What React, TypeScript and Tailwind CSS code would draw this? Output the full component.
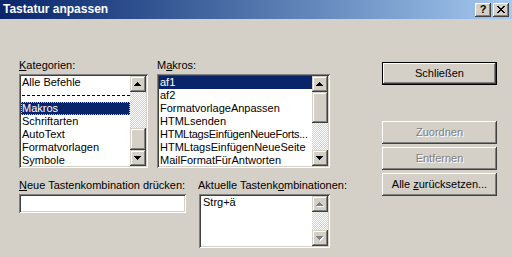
import React from "react";

const raised =
  "shadow-[inset_-1px_-1px_0_#404040,inset_1px_1px_0_#ffffff,inset_-2px_-2px_0_#808080,inset_2px_2px_0_#d4d0c8]";
const raisedSb =
  "shadow-[inset_-1px_-1px_0_#404040,inset_1px_1px_0_#d4d0c8,inset_-2px_-2px_0_#808080,inset_2px_2px_0_#ffffff]";
const sunken =
  "shadow-[inset_1px_1px_0_#808080,inset_-1px_-1px_0_#ffffff,inset_2px_2px_0_#404040,inset_-2px_-2px_0_#d4d0c8]";
const checker =
  "[background:repeating-conic-gradient(#d4d0c8_0_25%,#ffffff_0_50%)_0_0/2px_2px]";

function Arrow({ up, disabled }: { up: boolean; disabled?: boolean }) {
  const rows = up
    ? [
        [3, 1],
        [2, 3],
        [1, 5],
        [0, 7],
      ]
    : [
        [0, 7],
        [1, 5],
        [2, 3],
        [3, 1],
      ];
  return (
    <svg width="8" height="5" viewBox="0 0 8 5" shapeRendering="crispEdges">
      {disabled &&
        rows.map(([x, w], i) => (
          <rect key={"s" + i} x={x + 1} y={i + 1} width={w} height={1} fill="#ffffff" />
        ))}
      {rows.map(([x, w], i) => (
        <rect key={i} x={x} y={i} width={w} height={1} fill={disabled ? "#808080" : "#000000"} />
      ))}
    </svg>
  );
}

function SbButton({ up, disabled }: { up: boolean; disabled?: boolean }) {
  return (
    <div className={`w-[16px] h-[16px] flex-none bg-[#d4d0c8] flex items-center justify-center ${raisedSb}`}>
      <Arrow up={up} disabled={disabled} />
    </div>
  );
}

function ScrollBar({
  trackBefore,
  thumbH,
  disabled,
}: {
  trackBefore?: number;
  thumbH?: number;
  disabled?: boolean;
}) {
  return (
    <div className="w-[16px] h-full flex flex-col flex-none">
      <SbButton up disabled={disabled} />
      <div className={`flex-1 flex flex-col ${checker}`}>
        {thumbH !== undefined && (
          <div
            className={`w-[16px] flex-none bg-[#d4d0c8] ${raisedSb}`}
            style={{ marginTop: trackBefore, height: thumbH }}
          />
        )}
      </div>
      <SbButton up={false} disabled={disabled} />
    </div>
  );
}

function Row({
  children,
  selected,
  focus,
  tight,
}: {
  children: React.ReactNode;
  selected?: boolean;
  focus?: boolean;
  tight?: boolean;
}) {
  return (
    <div
      className={`h-[13px] leading-[13px] pl-[1px] whitespace-nowrap ${tight ? "tracking-[-0.25px]" : ""} ${
        selected ? "bg-[#0a246a] text-white" : "text-black"
      } ${focus ? "outline-1 outline-dotted outline-[#d8c078] -outline-offset-1" : ""}`}
    >
      {children}
    </div>
  );
}

function ListBox({
  className,
  children,
  scroll,
}: {
  className: string;
  children: React.ReactNode;
  scroll: React.ReactNode;
}) {
  return (
    <div className={`bg-white p-[2px] ${sunken} ${className}`}>
      <div className="flex h-full">
        <div className="flex-1 overflow-hidden">{children}</div>
        {scroll}
      </div>
    </div>
  );
}

function Btn({
  children,
  disabled,
  def,
}: {
  children: React.ReactNode;
  disabled?: boolean;
  def?: boolean;
}) {
  const inner = (
    <div
      className={`h-full w-full flex items-center justify-center bg-[#d4d0c8] ${raised} ${
        disabled ? "text-[#808080] [text-shadow:1px_1px_0_#ffffff]" : "text-black"
      }`}
    >
      {children}
    </div>
  );
  return (
    <div className={`w-[115px] h-[23px] ${def ? "border border-black" : ""}`}>{inner}</div>
  );
}

export default function App() {
  return (
    <div className="w-[512px] h-[257px] bg-[#d4d0c8] flex flex-col overflow-hidden text-[11px] [font-family:'Liberation_Sans',Arial,sans-serif] text-black">
      {/* Title bar */}
      <div className="h-[19px] flex-none flex items-center justify-between bg-gradient-to-r from-[#0a246a] to-[#a6caf0] pl-[3px] pr-[3px]">
        <span className="text-white font-bold text-[12px] leading-[19px]">Tastatur anpassen</span>
        <div className="flex gap-[2px]">
          <div className={`w-[16px] h-[14px] bg-[#d4d0c8] flex items-center justify-center ${raised}`}>
            <span className="font-bold text-[11px] leading-none text-black">?</span>
          </div>
          <div className={`w-[16px] h-[14px] bg-[#d4d0c8] flex items-center justify-center ${raised}`}>
            <svg width="8" height="7" viewBox="0 0 8 7" shapeRendering="crispEdges">
              <path d="M0 0h2v1h-2zM6 0h2v1h-2zM1 1h2v1h-2zM5 1h2v1h-2zM2 2h4v1h-4zM3 3h2v1h-2zM2 4h4v1h-4zM1 5h2v1h-2zM5 5h2v1h-2zM0 6h2v1h-2zM6 6h2v1h-2z" fill="#000" />
            </svg>
          </div>
        </div>
      </div>

      {/* Body */}
      <div className="flex flex-1">
        {/* Left area */}
        <div className="w-[330px] flex-none pl-[18px] pt-[40px]">
          <div className="flex">
            <div className="w-[130px] flex-none">
              <div className="h-[13px] leading-[13px] pl-[1px]">
                <span className="underline">K</span>ategorien:
              </div>
              <ListBox
                className="mt-[2px] ml-[1px] w-[129px] h-[94px]"
                scroll={<ScrollBar trackBefore={36} thumbH={22} />}
              >
                <Row>Alle Befehle</Row>
                <div className="h-[13px] flex items-center pl-[1px]">
                  <div className="w-full border-t border-dashed border-black" />
                </div>
                <Row selected focus>
                  Makros
                </Row>
                <Row>Schriftarten</Row>
                <Row>AutoText</Row>
                <Row>Formatvorlagen</Row>
                <Row>Symbole</Row>
              </ListBox>
            </div>
            <div className="ml-[8px] w-[174px] flex-none">
              <div className="h-[13px] leading-[13px] pl-[1px]">
                M<span className="underline">a</span>kros:
              </div>
              <ListBox
                className="mt-[2px] ml-[1px] w-[173px] h-[94px]"
                scroll={<ScrollBar trackBefore={0} thumbH={31} />}
              >
                <Row selected>af1</Row>
                <Row>af2</Row>
                <Row>FormatvorlageAnpassen</Row>
                <Row>HTMLsenden</Row>
                <Row tight>HTMLtagsEinfügenNeueForts...</Row>
                <Row>HTMLtagsEinfügenNeueSeite</Row>
                <Row>MailFormatFürAntworten</Row>
              </ListBox>
            </div>
          </div>

          <div className="flex mt-[11px]">
            <div className="w-[168px] flex-none">
              <div className="h-[13px] leading-[13px] pl-[1px] whitespace-nowrap">
                <span className="underline">N</span>eue Tastenkombination drücken:
              </div>
              <div className={`mt-[2px] ml-[1px] w-[167px] h-[19px] bg-white ${sunken}`} />
            </div>
            <div className="ml-[12px] w-[132px] flex-none">
              <div className="h-[13px] leading-[13px] whitespace-nowrap">
                Aktuelle Tastenk<span className="underline">o</span>mbinationen:
              </div>
              <ListBox
                className="mt-[2px] ml-[1px] w-[131px] h-[54px]"
                scroll={<ScrollBar disabled />}
              >
                <div className="h-[13px] leading-[13px] pl-[2px]">Strg+ä</div>
              </ListBox>
            </div>
          </div>
        </div>

        {/* Right buttons */}
        <div className="ml-[52px] pt-[43px] flex flex-col">
          <Btn def>Schließen</Btn>
          <div className="mt-[36px] flex flex-col gap-[3px]">
            <Btn disabled>Zuordnen</Btn>
            <Btn disabled>Entfernen</Btn>
            <Btn>
              <span>
                Alle <span className="underline">z</span>urücksetzen...
              </span>
            </Btn>
          </div>
        </div>
      </div>
    </div>
  );
}
